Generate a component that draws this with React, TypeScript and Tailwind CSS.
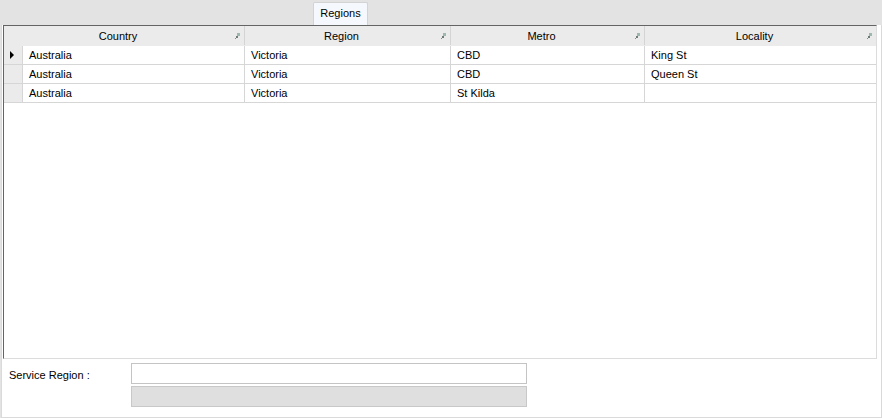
import React from "react";

const cols = [
  { name: "Country", w: "w-[222px]" },
  { name: "Region", w: "w-[206px]" },
  { name: "Metro", w: "w-[194px]" },
];

const rows = [
  ["Australia", "Victoria", "CBD", "King St"],
  ["Australia", "Victoria", "CBD", "Queen St"],
  ["Australia", "Victoria", "St Kilda", ""],
];

function Glyph() {
  return (
    <svg width="5" height="6" viewBox="0 0 5 6" className="absolute right-[4px] top-[7px]">
      <rect x="2" y="0" width="3" height="3" fill="#9cb8b0" />
      <rect x="1" y="3" width="2" height="2" fill="#6d7a78" />
      <rect x="0" y="5" width="1" height="1" fill="#8a8a8a" />
    </svg>
  );
}

export default function App() {
  return (
    <div
      className="w-[882px] h-[418px] bg-[#e3e3e3] flex flex-col text-[11px] text-black overflow-hidden"
      style={{ fontFamily: '"Liberation Sans", Arial, sans-serif' }}
    >
      {/* Tab strip */}
      <div className="h-[25px] flex items-end">
        <div className="ml-[313px] w-[55px] h-[23px] bg-[#f5f9fd] border border-b-0 border-[#d3d3d3] rounded-t-[2px] flex items-center justify-center text-[11px] pb-[1px]">
          Regions
        </div>
      </div>

      {/* Tab page */}
      <div className="ml-[1px] w-[881px] h-[393px] bg-white border-r border-b border-l border-[#dadada] flex flex-col">
        {/* Grid */}
        <div className="ml-[1px] w-[874px] h-[334px] border-t border-l border-t-[#646464] border-l-[#646464] border-r border-b border-r-[#dcdcdc] border-b-[#dcdcdc] flex flex-col">
          {/* Header */}
          <div className="h-[20px] flex bg-[#ebebeb] border-b border-[#ebebeb]">
            <div className="w-[241px] relative border-r border-[#d4d4d4] flex items-center justify-center pr-[12px] pt-[1px]">
              Country
              <Glyph />
            </div>
            <div className="w-[206px] relative border-r border-[#d4d4d4] flex items-center justify-center pr-[12px] pt-[1px]">
              Region
              <Glyph />
            </div>
            <div className="w-[194px] relative border-r border-[#d4d4d4] flex items-center justify-center pr-[12px] pt-[1px]">
              Metro
              <Glyph />
            </div>
            <div className="flex-1 relative flex items-center justify-center pr-[12px] pt-[1px]">
              Locality
              <Glyph />
            </div>
          </div>
          {/* Rows */}
          {rows.map((r, i) => (
            <div key={i} className="h-[19px] flex border-b border-[#d6d6d6]">
              <div className="w-[19px] bg-[#ebebeb] border-r border-[#d6d6d6] flex items-center justify-center">
                {i === 0 && (
                  <svg width="4" height="8" viewBox="0 0 4 8" className="ml-[-2px]">
                    <path d="M0 0 L4 4 L0 8 Z" fill="#000" />
                  </svg>
                )}
              </div>
              {cols.map((c, j) => (
                <div key={j} className={`${c.w} border-r border-[#d6d6d6] flex items-center pl-[6px]`}>
                  {r[j]}
                </div>
              ))}
              <div className="flex-1 flex items-center pl-[6px]">{r[3]}</div>
            </div>
          ))}
        </div>

        {/* Bottom form */}
        <div className="flex-1 flex">
          <div className="w-[129px] pl-[7px] pt-[8px]">Service Region :</div>
          <div className="flex flex-col gap-[2px] pt-[4px]">
            <div className="w-[396px] h-[21px] bg-white border border-[#c4c4c4]" />
            <div className="w-[396px] h-[21px] bg-[#dfdfdf] border border-[#c8c8c8]" />
          </div>
        </div>
      </div>
    </div>
  );
}
